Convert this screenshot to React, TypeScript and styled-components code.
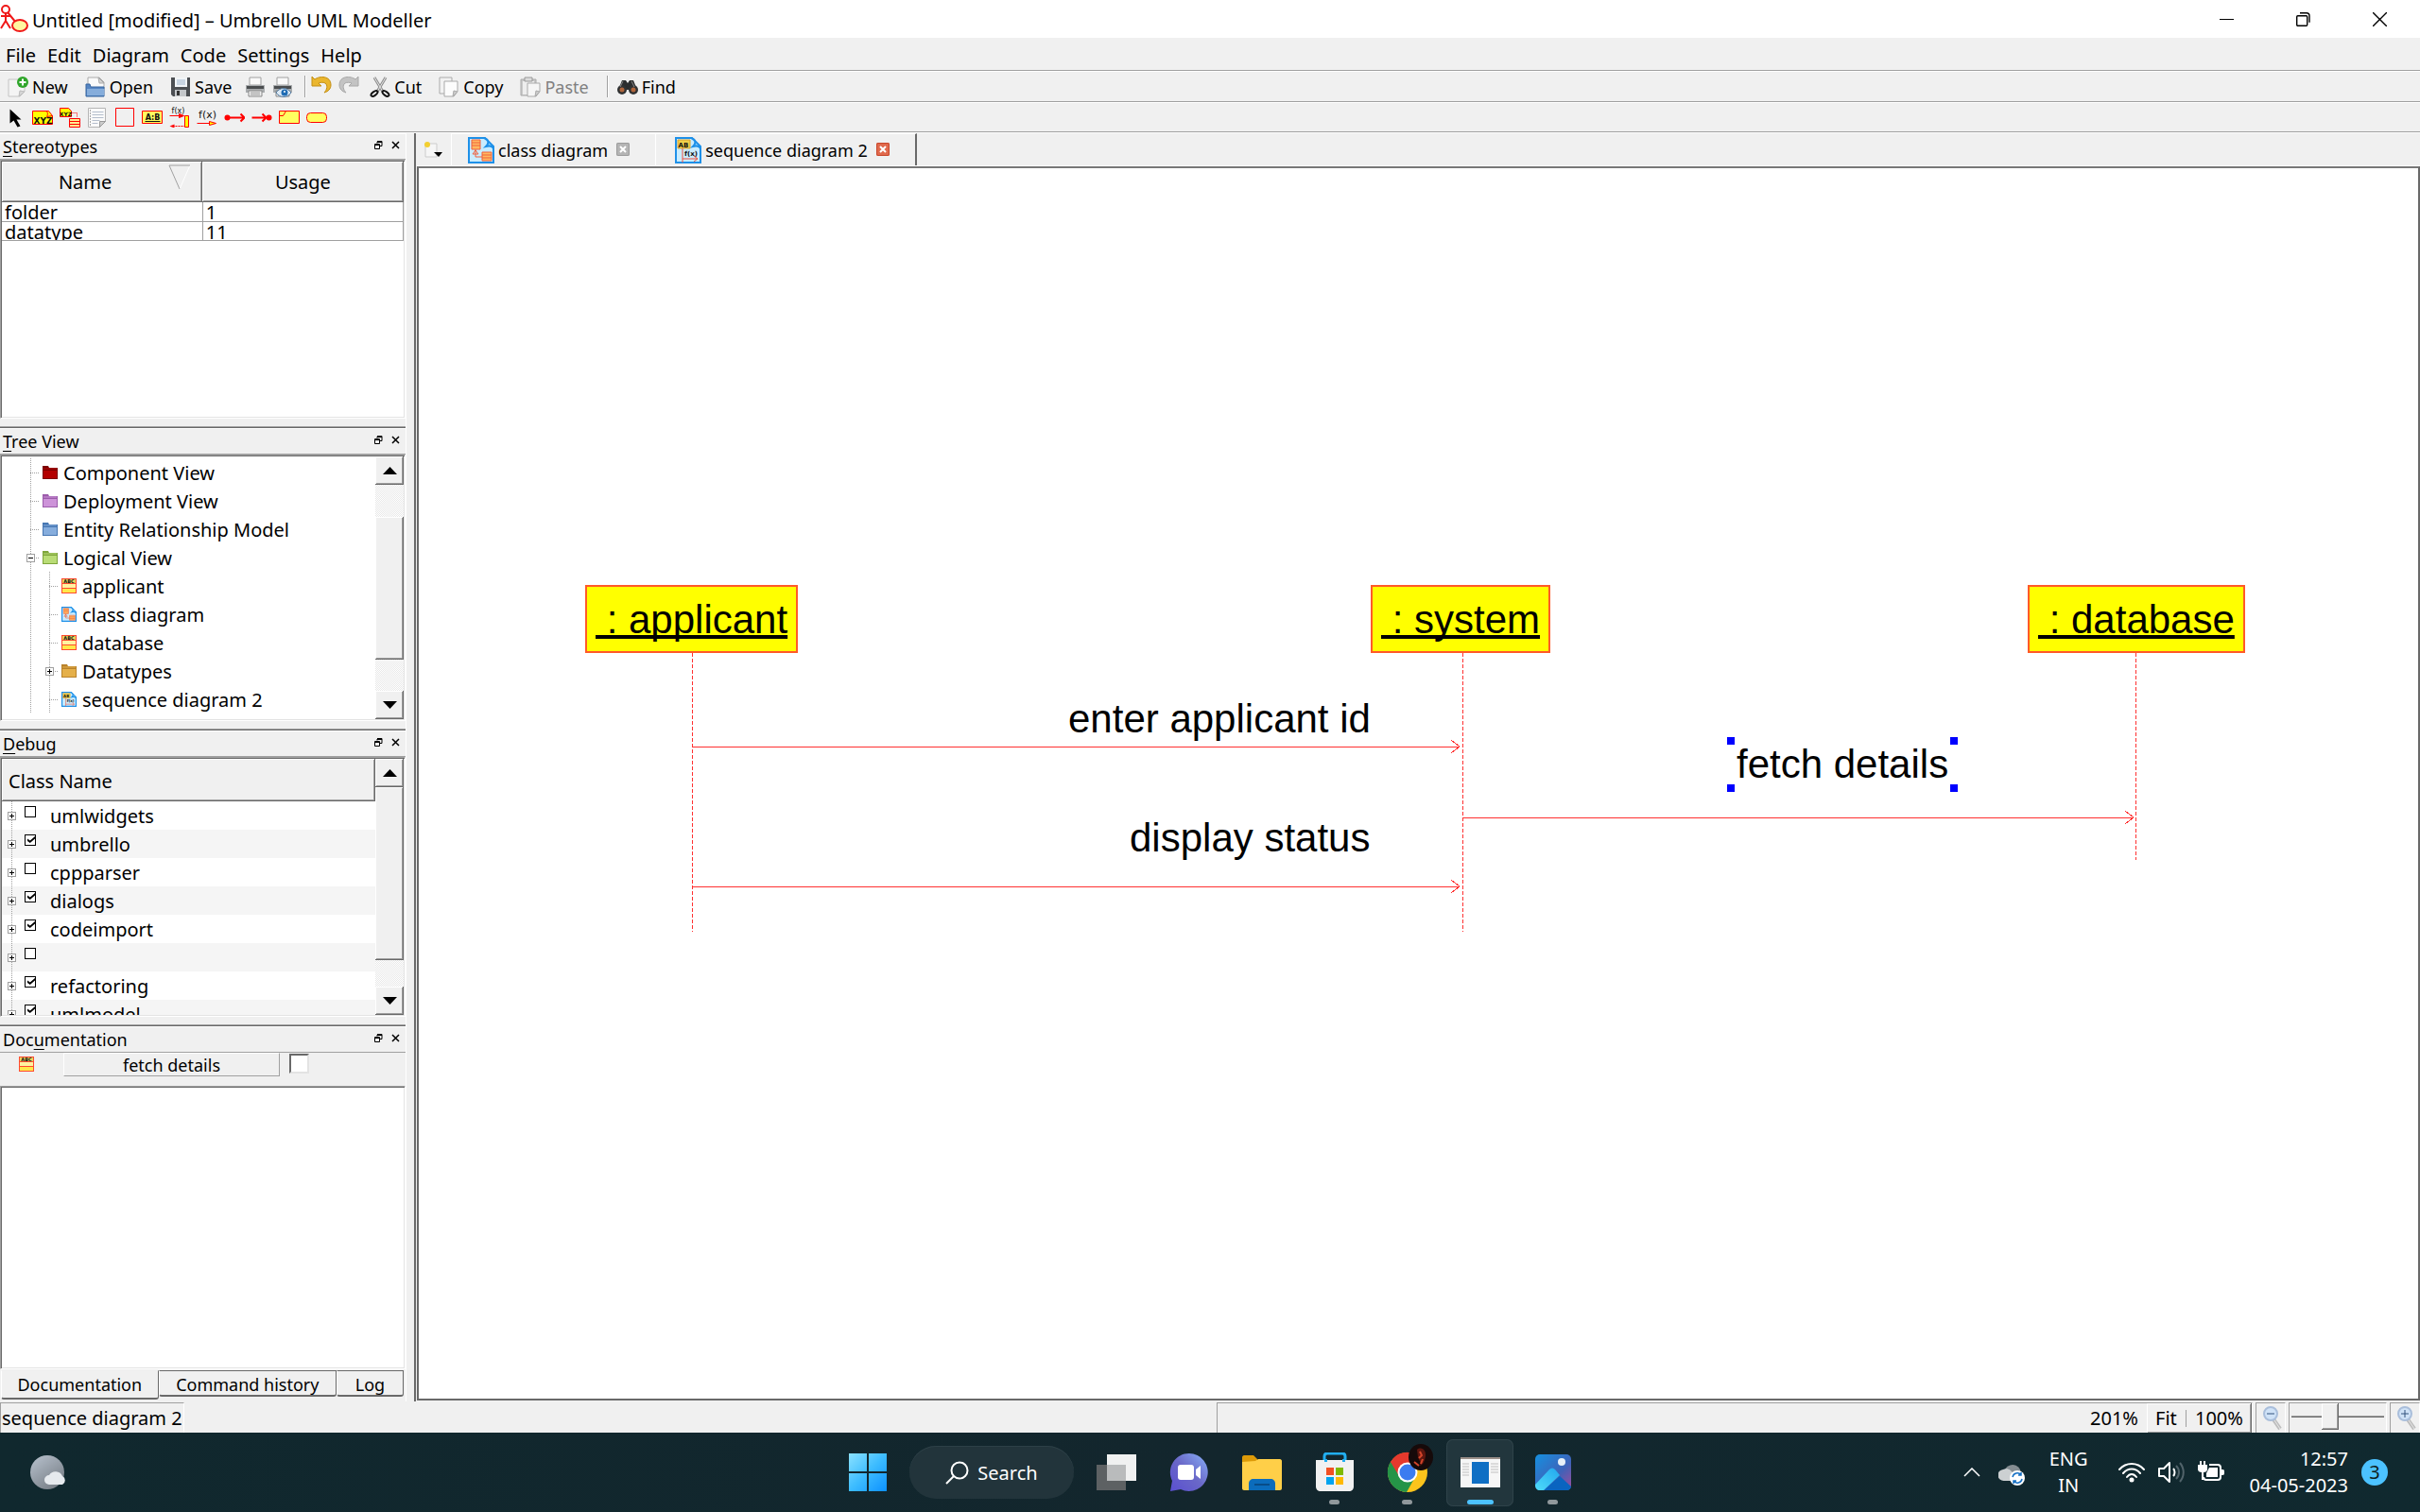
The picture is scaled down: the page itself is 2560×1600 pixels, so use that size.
import React, { ReactNode } from "react";
import styled, { createGlobalStyle, css } from "styled-components";

const face = "#f0f0f0";
const shade = "#a0a0a0";
const dark = "#696969";
const ui = `"Noto Sans", "Open Sans", sans-serif`;

const raised = css`
  background: ${face};
  box-shadow: inset -1px -1px 0 ${dark}, inset 1px 1px 0 #fff, inset -2px -2px 0 ${shade};
`;

const Global = createGlobalStyle`
  * { box-sizing: border-box; }
  body { margin: 0; font-family: ${ui}; font-size: 20px; color: #000; background: ${face}; }
  button { font: inherit; color: inherit; background: none; border: 0; padding: 0; margin: 0; }
  ul { list-style: none; margin: 0; padding: 0; }
  svg { display: block; flex: none; }
`;

const Window = styled.div`
  display: flex;
  flex-direction: column;
  height: 100vh;
  overflow: hidden;
  background: ${face};
  white-space: nowrap;
`;

/* ---------- window chrome ---------- */

const TitleBar = styled.header`
  display: flex;
  align-items: center;
  flex: none;
  height: 40px;
  padding-right: 2px;
  background: #fff;
`;
const WindowTitle = styled.h1`
  flex: 1;
  margin: 0;
  padding: 2px 0 0 4px;
  font-size: 20px;
  font-weight: 400;
`;
const WindowButton = styled.button`
  display: grid;
  place-items: center;
  width: 81px;
  height: 40px;
`;
const MenuBar = styled.nav`
  display: flex;
  align-items: center;
  flex: none;
  height: 35px;
  padding-top: 2px;
  border-bottom: 1px solid ${shade};
`;
const MenuItem = styled.button`
  padding: 0 6px;
`;
const Toolbar = styled.div<{ $h: number; $pad?: number }>`
  display: flex;
  align-items: stretch;
  flex: none;
  height: ${(p) => p.$h}px;
  padding-left: ${(p) => p.$pad ?? 0}px;
  border-top: 1px solid #fff;
  border-bottom: 1px solid ${shade};
`;
const TextTool = styled.button`
  display: flex;
  align-items: center;
  gap: 4px;
  padding: 0 10px 0 8px;
  font-size: 18px;
  &:disabled { color: #808080; }
`;
const IconTool = styled.button`
  display: flex;
  align-items: center;
  padding: 0 3px 0 4px;
`;
const ToolSeparator = styled.span`
  width: 2px;
  margin: 4px 1px 4px 9px;
  border-left: 1px solid ${shade};
  border-right: 1px solid #fff;
`;

/* ---------- layout ---------- */

const Workspace = styled.div`
  display: grid;
  grid-template-columns: 438px minmax(0, 1fr);
  flex: 1;
  min-height: 0;
  border-top: 1px solid #fff;
`;
const DockColumn = styled.div`
  display: grid;
  grid-template-rows: minmax(0, 312fr) minmax(0, 320fr) minmax(0, 313fr) minmax(0, 397fr);
  min-height: 0;
  margin-right: 8px;
  border-right: 1px solid #fff;
`;
const Dock = styled.section`
  display: flex;
  flex-direction: column;
  min-height: 0;
  padding-bottom: 9px;
  border-bottom: 1px solid ${dark};
  box-shadow: inset 0 -1px 0 ${shade};
  &:last-child { padding-bottom: 2px; border: 0; box-shadow: none; }
`;
const DockHeader = styled.header`
  display: flex;
  align-items: center;
  flex: none;
  height: 28px;
  padding-right: 2px;
  border-top: 1px solid #fff;
  border-bottom: 1px solid ${shade};
`;
const DockTitle = styled.h2`
  flex: 1;
  margin: 0;
  padding-left: 3px;
  font-size: 18px;
  font-weight: 400;
  text-underline-offset: 3px;
`;
const DockButton = styled.button`
  display: grid;
  place-items: center;
  width: 18px;
  height: 22px;
  padding-bottom: 3px;
`;
const Sunken = styled.div`
  display: flex;
  flex: 1;
  min-height: 0;
  overflow: hidden;
  background: #fff;
  border: 1px solid ${shade};
  border-right-color: #fff;
  border-bottom-color: #fff;
  box-shadow: inset 1px 1px 0 ${dark}, inset -1px -1px 0 #e3e3e3;
  padding: 1px 0 1px 1px;
`;

/* ---------- stereotypes ---------- */

const StereoTable = styled.table`
  width: 100%;
  height: max-content;
  border-collapse: collapse;
  table-layout: fixed;
  margin-right: 1px;
`;
const HeadCell = styled.th`
  height: 43px;
  padding: 0;
  font-weight: 400;
  ${raised}
`;
const HeadInner = styled.div<{ $sorted?: boolean }>`
  display: flex;
  justify-content: center;
  align-items: center;
  padding-right: ${(p) => (p.$sorted ? 12 : 0)}px;
  span { flex: 1; text-align: center; }
`;
const SortMark = styled.svg`
  margin-bottom: 10px;
`;
const StereoCell = styled.td`
  height: 20px;
  padding: 0 3px;
  border-bottom: 1px solid ${shade};
  border-right: 1px solid ${shade};
`;
const Clip = styled.div`
  height: 19px;
  line-height: 22px;
  overflow: hidden;
`;

/* ---------- scroll bar ---------- */

const ScrollTrack = styled.div`
  display: flex;
  flex-direction: column;
  flex: none;
  width: 30px;
  margin-right: 1px;
  background: repeating-conic-gradient(#fff 0 25%, #e8e8e8 0 50%) 0 0 / 2px 2px;
`;
const ScrollButton = styled.button`
  display: grid;
  place-items: center;
  flex: none;
  height: 30px;
  ${raised}
`;
const ScrollSpace = styled.div<{ $grow: number }>`
  flex: ${(p) => p.$grow} 1 0;
`;
const ScrollThumb = styled.div<{ $grow: number }>`
  flex: ${(p) => p.$grow} 1 0;
  ${raised}
`;

/* ---------- trees ---------- */

const Tree = styled.ul<{ $top?: number }>`
  flex: 1;
  min-width: 0;
  padding-top: ${(p) => p.$top ?? 0}px;
  overflow: hidden;
`;
const TreeRow = styled.li<{ $striped?: boolean }>`
  display: flex;
  align-items: stretch;
  height: 30px;
  line-height: 32px;
  background: ${(p) => (p.$striped ? "#f5f5f5" : "#fff")};
  > svg { align-self: center; }
`;
const Guide = styled.span<{ $w?: number; $left: number; $stub?: boolean }>`
  flex: none;
  position: relative;
  width: ${(p) => p.$w ?? 20}px;
  background-repeat: repeat-y, repeat-x;
  background-image: linear-gradient(${shade} 50%, transparent 50%)
    ${(p) => (p.$stub ? `, linear-gradient(90deg, ${shade} 50%, #fff 50%)` : "")};
  background-size: 1px 2px, 2px 1px;
  background-position: ${(p) => p.$left}px 0, ${(p) => p.$left}px 15px;
  background-clip: border-box, content-box;
  padding: 0 4px 0 ${(p) => p.$left}px;
`;
const Expander = styled.button<{ $left: number }>`
  position: absolute;
  left: ${(p) => p.$left - 4}px;
  top: 11px;
  width: 9px;
  height: 9px;
  background: #fff;
  border: 1px solid ${shade};
  svg { margin: 1px; }
`;
const TreeLabel = styled.span`
  padding-left: 6px;
`;
const ClassHeader = styled.div`
  flex: none;
  height: 45px;
  line-height: 48px;
  padding-left: 7px;
  ${raised}
`;
const DebugList = styled.div`
  display: flex;
  flex-direction: column;
  flex: 1;
  min-width: 0;
`;
const CheckLabel = styled.label`
  display: flex;
  gap: 15px;
  padding-left: 4px;
`;
const TickBox = styled.input`
  appearance: none;
  position: relative;
  width: 12px;
  height: 12px;
  margin: 5px 0 0;
  background: #fff;
  border: 1px solid #000;
  &:checked::after {
    content: "";
    position: absolute;
    left: 2px;
    top: 1px;
    width: 8px;
    height: 7px;
    background: #000;
    clip-path: polygon(0 35%, 35% 65%, 100% 0, 100% 35%, 35% 100%, 0 70%);
  }
`;

/* ---------- documentation ---------- */

const DocBar = styled.div`
  display: flex;
  flex: none;
  height: 35px;
  padding-left: 20px;
  > svg { margin-top: 4px; }
`;
const DocName = styled.button`
  width: 229px;
  height: 25px;
  margin: 0 10px 0 31px;
  font-size: 18px;
  line-height: 24px;
  border: 1px solid;
  border-color: #fff ${shade} ${shade} #fff;
`;
const DocCheck = styled.input`
  appearance: none;
  width: 21px;
  height: 21px;
  margin: 1px 0;
  background: #fff;
  border: 2px solid;
  border-color: ${dark} #e3e3e3 #e3e3e3 ${dark};
`;
const DocText = styled.textarea`
  flex: 1;
  border: 0;
  margin: 1px;
  padding: 4px;
  resize: none;
  outline: 0;
  font: inherit;
`;
const BottomTabs = styled.div`
  display: flex;
  align-items: flex-start;
  flex: none;
  height: 32px;
  padding: 1px 2px 0 1px;
`;
const BottomTab = styled.button<{ $active?: boolean; $grow: number }>`
  flex: ${(p) => p.$grow} 1 0;
  height: ${(p) => (p.$active ? 31 : 28)}px;
  font-size: 18px;
  line-height: 28px;
  background: ${face};
  border: 1px solid;
  border-color: ${(p) => (p.$active ? face : dark)} ${dark} ${dark} #fff;
  border-bottom-width: 2px;
  border-radius: 0 0 3px 3px;
`;

/* ---------- document area ---------- */

const Editor = styled.main`
  display: flex;
  flex-direction: column;
  min-width: 0;
  min-height: 0;
  padding: 0 0 1px 1px;
  border-left: 2px solid ${dark};
`;
const TabStrip = styled.div`
  display: flex;
  flex: none;
  height: 35px;
  border-bottom: 1px solid #fff;
`;
const NewTab = styled.button`
  display: flex;
  align-items: center;
  width: 36px;
  padding-left: 7px;
`;
const Tab = styled.div<{ $active?: boolean }>`
  display: flex;
  align-items: center;
  padding: 0 27px 0 ${(p) => (p.$active ? 20 : 17)}px;
  border-left: 1px solid #fff;
  border-top: 1px solid #fff;
  border-right: ${(p) => (p.$active ? `2px solid ${dark}` : "0")};
  font-size: 18px;
`;
const TabName = styled.button`
  display: flex;
  align-items: center;
  gap: 4px;
`;
const TabClose = styled.button<{ $active?: boolean }>`
  width: 14px;
  height: 14px;
  margin: 0 0 2px 9px;
  border-radius: 2px;
  background: ${(p) => (p.$active ? "#e0694c" : "#b4b4b4")};
  box-shadow: inset 0 0 0 1px ${(p) => (p.$active ? "#c8472c" : "#9c9c9c")};
`;
const Canvas = styled.div`
  position: relative;
  flex: 1;
  min-height: 0;
  overflow: hidden;
  background: #fff;
  border: 2px solid ${dark};
  border-top-color: #777;
  font-family: "Liberation Sans", Arial, sans-serif;
  font-size: 42px;
  line-height: 48px;
`;
const Wires = styled.svg`
  position: absolute;
  inset: 0;
  width: 100%;
  height: 100%;
`;
const Lifeline = styled.div<{ $x: number; $y: number }>`
  position: absolute;
  left: ${(p) => p.$x}px;
  top: ${(p) => p.$y}px;
  padding: 11px 9px 9px;
  white-space: pre;
  background: #ff0;
  border: 2px solid #ff5a28;
  text-decoration: underline;
  text-decoration-thickness: 4px;
  text-underline-offset: 2px;
  text-decoration-skip-ink: none;
`;
const Message = styled.div<{ $x: number; $y: number }>`
  position: absolute;
  left: ${(p) => p.$x}px;
  top: ${(p) => p.$y}px;
  padding: 5px 10px;
`;
const Handle = styled.i<{ $right?: boolean; $bottom?: boolean }>`
  position: absolute;
  width: 8px;
  height: 8px;
  background: #00f;
  ${(p) => (p.$right ? "right: 0;" : "left: 0;")}
  ${(p) => (p.$bottom ? "bottom: 0;" : "top: 0;")}
`;

/* ---------- status bar ---------- */

const StatusBar = styled.footer`
  display: grid;
  grid-template-columns: 1287fr 1273fr;
  flex: none;
  height: 33px;
  padding: 1px 0 2px;
`;
const StatusName = styled.span`
  justify-self: start;
  padding: 0 1px;
  line-height: 32px;
  border: 1px solid;
  border-color: ${shade} #fff #fff ${shade};
`;
const StatusRight = styled.div`
  display: flex;
  gap: 3px;
`;
const ZoomInfo = styled.div`
  display: flex;
  flex: 1;
  justify-content: flex-end;
  align-items: stretch;
  border: 1px solid;
  border-color: ${shade} #fff #fff ${shade};
  line-height: 32px;
`;
const ZoomButtons = styled.div`
  display: flex;
  align-items: center;
  margin-left: 9px;
  width: 111px;
  justify-content: space-evenly;
  ${raised}
`;
const ZoomRule = styled.i`
  width: 1px;
  height: 18px;
  background: ${shade};
`;
const ZoomCell = styled.button`
  display: grid;
  place-items: center;
  width: 32px;
  padding-left: 4px;
  border: 1px solid;
  border-color: ${shade} #fff #fff ${shade};
`;
const SliderCell = styled.div`
  display: flex;
  width: 104px;
  border: 1px solid;
  border-color: ${shade} #fff #fff ${shade};
`;
const Slider = styled.input`
  appearance: none;
  width: 100%;
  height: 28px;
  margin: 0 2px;
  background: linear-gradient(${dark}, ${dark}) 0 14px / 100% 1px no-repeat,
    linear-gradient(${shade}, ${shade}) 0 13px / 100% 1px no-repeat;
  &::-webkit-slider-thumb {
    appearance: none;
    width: 18px;
    height: 28px;
    ${raised}
  }
`;

/* ---------- taskbar ---------- */

const Taskbar = styled.footer`
  display: grid;
  grid-template-columns: 1fr auto 1fr;
  align-items: center;
  flex: none;
  height: 84px;
  color: #fff;
  background: linear-gradient(90deg, #10282e, #13262d 50%, #10292f);
`;
const Weather = styled.button`
  justify-self: start;
  margin-left: 31px;
`;
const Apps = styled.div`
  display: flex;
  align-items: center;
`;
const AppButton = styled.button<{ $active?: boolean; $running?: boolean }>`
  position: relative;
  display: grid;
  place-items: center;
  width: 71px;
  height: 71px;
  margin: 0 3px;
  border-radius: 7px;
  ${(p) => p.$active && "background: #22363d; box-shadow: inset 0 0 0 1px #2f434a;"}
  &::after {
    content: "";
    position: absolute;
    bottom: 2px;
    width: ${(p) => (p.$active ? 28 : 11)}px;
    height: 5px;
    border-radius: 3px;
    background: ${(p) => (p.$active ? "#4cc2ff" : p.$running ? "#90989c" : "transparent")};
  }
`;
const SearchPill = styled.button`
  display: flex;
  align-items: center;
  justify-content: center;
  gap: 9px;
  width: 174px;
  height: 56px;
  margin: 0 6px;
  border-radius: 28px;
  background: #22343b;
  box-shadow: inset 0 1px 0 #2d4047;
`;
const Tray = styled.div`
  display: flex;
  align-items: center;
  justify-self: end;
  padding-right: 34px;
  line-height: 28px;
`;
const TrayButton = styled.button<{ $before?: number }>`
  margin-left: ${(p) => p.$before ?? 0}px;
`;
const Clock = styled.button`
  margin-left: 27px;
  text-align: right;
`;
const Badge = styled.button`
  width: 28px;
  height: 28px;
  margin-left: 14px;
  border-radius: 50%;
  background: #4cc2ff;
  color: #102020;
`;

/* ---------- icons ---------- */

const Ico = ({ s = 22, w, h, vb, children }: { s?: number; w?: number; h?: number; vb?: string; children: ReactNode }) => (
  <svg width={w ?? s} height={h ?? s} viewBox={vb ?? `0 0 ${w ?? s} ${h ?? s}`} fill="none" aria-hidden="true">
    {children}
  </svg>
);

const AppLogo = () => (
  <Ico w={30} h={30}>
    <g stroke="#f01818" strokeWidth="2" fill="#fff">
      <circle cx="6" cy="5" r="4" />
      <path d="M6 9v9M1 12h11M6 17l-5 8M6 17l5 8M8 8l9 11" fill="none" />
      <ellipse cx="21" cy="22" rx="8" ry="6" fill="#fff6a0" />
    </g>
  </Ico>
);

const NewIcon = () => (
  <Ico>
    <path d="M1 3h17v13l-5 5H1z" fill="#f4f4f4" stroke="#c4c4c4" />
    <path d="M12 21l1-6 5 1z" fill="#d8d8d8" stroke="#bbb" />
    <circle cx="16" cy="6" r="6" fill="#2fa52a" />
    <path d="M16 2.500v7M12.500 6h7" stroke="#fff" strokeWidth="2" />
  </Ico>
);
const OpenIcon = () => (
  <Ico>
    <path d="M3 12V1h12l5 5v7z" fill="#fafafa" stroke="#aaa" />
    <path d="M14 1l1 6 5 0z" fill="#d5d5d5" stroke="#aaa" />
    <path d="M1 8h4l1 3h14v10H1z" fill="#5585c2" stroke="#36649f" />
    <path d="M2 13h18v7H2z" fill="#86addb" />
  </Ico>
);
const SaveIcon = () => (
  <Ico>
    <path d="M1 1h20v20H3l-2-2z" fill="#4c4f53" />
    <path d="M5 1h13v10H5z" fill="#f2f5f8" />
    <path d="M7 4h9M7 6h9M7 8h9" stroke="#9fb4cc" />
    <path d="M5 14h12v7H5z" fill="#c4c7ca" />
    <path d="M7 15h3v5H7z" fill="#333" />
  </Ico>
);
const PrintIcon = ({ preview }: { preview?: boolean }) => (
  <Ico>
    <path d="M5 1h12v8H5z" fill="#fafafa" stroke="#a0a0a0" />
    <path d="M1 9h20v8H1z" fill="#a9acae" />
    <path d="M2 10h18v3H2z" fill="#4a4d4f" />
    <path d="M4 15h14v6H4z" fill="#eee" stroke="#888" />
    <path d="M6 17h10M6 19h10" stroke="#999" />
    {preview && (
      <>
        <path d="M4 17c4-6 12-6 16 0-4 6-12 6-16 0z" fill="#dbe9f5" stroke="#54799d" />
        <circle cx="13" cy="17" r="3.500" fill="#1f6cb4" />
        <circle cx="13" cy="16" r="1" fill="#fff" />
      </>
    )}
  </Ico>
);
const UndoIcon = ({ redo }: { redo?: boolean }) => (
  <Ico>
    <g transform={redo ? "translate(22 -1) scale(-1 1)" : "translate(0 -1)"}>
      <path
        d="M1 1l3 3c5-4 17-4 17 6 0 4-3 7-7 8 3-3 4-8 1-10-2-1-5-1-7 0l3 3H1z"
        fill={redo ? "#c3c3c3" : "#eab62e"}
        stroke={redo ? "#a8a8a8" : "#c38e12"}
        strokeWidth="1"
      />
    </g>
  </Ico>
);
const CutIcon = () => (
  <Ico>
    <path d="M5 1l9 15M17 1L8 16" stroke="#8e8e8e" strokeWidth="3" />
    <path d="M5 1l9 15M17 1L8 16" stroke="#e4e4e4" strokeWidth="1" />
    <g stroke="#111" strokeWidth="2">
      <ellipse cx="5" cy="18" rx="4" ry="2" transform="rotate(-35 5 18)" />
      <ellipse cx="17" cy="18" rx="4" ry="2" transform="rotate(35 17 18)" />
    </g>
  </Ico>
);
const CopyIcon = () => (
  <Ico>
    <path d="M1 1h13v17H1z" fill="#f2f2f2" stroke="#aaa" />
    <path d="M6 5h14v11l-4 5H6z" fill="#fcfcfc" stroke="#aaa" />
    <path d="M15 21l1-6 4 1z" fill="#ccc" stroke="#aaa" />
  </Ico>
);
const PasteIcon = () => (
  <Ico>
    <path d="M1 3h16v17H1z" fill="#c9c9c9" stroke="#aaa" />
    <path d="M3 5h12v14H3z" fill="#eee" />
    <path d="M5 1h8v4H5z" fill="#ddd" stroke="#999" />
    <path d="M8 7h13v9l-4 5H8z" fill="#f6f6f6" stroke="#aaa" />
    <path d="M16 21l1-6 4 1z" fill="#ccc" stroke="#aaa" />
  </Ico>
);
const FindIcon = () => (
  <Ico>
    <path d="M5 4h4l2 3 2-3h4l4 10H1z" fill="#2b2d2e" />
    <circle cx="5" cy="14" r="5" fill="#303233" />
    <circle cx="17" cy="14" r="5" fill="#303233" />
    <circle cx="5" cy="14" r="2.500" fill="#b0663c" />
    <circle cx="17" cy="14" r="2.500" fill="#b0663c" />
    <path d="M6 5l-3 6M15 5l3 6" stroke="#888" />
  </Ico>
);

const red = "#f00";
const IconText = ({ x, y, size, thin, children }: { x: number; y: number; size: number; thin?: boolean; children: string }) => (
  <text
    x={x}
    y={y}
    fontSize={size}
    fontWeight={thin ? 400 : 700}
    fontFamily="DejaVu Sans, sans-serif"
    fill="#111"
    textAnchor="middle"
  >
    {children}
  </text>
);

const drawTools: { name: string; icon: ReactNode }[] = [
  { name: "Select", icon: <path d="M5 2v15l4-3 4 7 3-1-4-7h5z" fill="#000" /> },
  {
    name: "Object",
    icon: (
      <>
        <path d="M0 4h17l4 5v9H0z" fill="#ff0" stroke={red} />
        <path d="M13 4c4 0 3 4 2 6l6-1" stroke={red} />
        <IconText x={11} y={17} size={9}>XYZ</IconText>
      </>
    ),
  },
  {
    name: "Create object",
    icon: (
      <>
        <path d="M0 1h9l3 3v6H0z" fill="#ff0" stroke={red} />
        <IconText x={6} y={9} size={6}>XYZ</IconText>
        <path d="M13 6h5v5" stroke={red} strokeDasharray="1 1" />
        <path d="M10 12h11v9H10zM10 15h11M10 18h11" fill="#ffef90" stroke={red} />
      </>
    ),
  },
  {
    name: "Note",
    icon: (
      <>
        <path d="M1 1h18v14l-6 6H1z" fill="#fafafa" stroke="#b5b5b5" />
        <path d="M5 5h12M5 8h12M5 11h12M5 14h8M5 17h6" stroke="#b4becc" />
        <path d="M3 3v17" stroke="#555" strokeDasharray="1 2" />
        <path d="M13 21v-6h6z" fill="#ccc" stroke="#999" />
      </>
    ),
  },
  { name: "Box", icon: <path d="M1 1h19v19H1z" stroke={red} /> },
  {
    name: "Text label",
    icon: (
      <>
        <path d="M0 4h21v13H0z" fill="#ffff60" stroke={red} />
        <IconText x={11} y={13} size={8}>A:B</IconText>
        <path d="M3 15h16" stroke="#111" />
      </>
    ),
  },
  {
    name: "Synchronous message",
    icon: (
      <>
        <IconText x={9} y={6} size={8} thin>f(x)</IconText>
        <path d="M0 9h13M10 7l5 2-5 2z" stroke={red} fill={red} />
        <path d="M16 9h4v12h-4z" fill="#ff0" stroke={red} />
        <path d="M3 20h13" stroke={red} strokeDasharray="2 1" />
        <path d="M5 18l-5 2 5 2z" fill={red} />
      </>
    ),
  },
  {
    name: "Asynchronous message",
    icon: (
      <>
        <IconText x={11} y={11} size={11} thin>f(x)</IconText>
        <path d="M0 17h13" stroke={red} strokeWidth="1" />
        <path d="M13 15l7 2-7 2z" fill="#ff0" stroke={red} />
      </>
    ),
  },
  {
    name: "Found message",
    icon: (
      <>
        <circle cx="3" cy="11" r="3" fill={red} />
        <path d="M3 11h18M17 7l4 4-4 4" stroke={red} strokeWidth="2" />
      </>
    ),
  },
  {
    name: "Lost message",
    icon: (
      <>
        <circle cx="18" cy="11" r="3" fill={red} />
        <path d="M0 11h16M11 7l4 4-4 4" stroke={red} strokeWidth="2" />
      </>
    ),
  },
  {
    name: "Combined fragment",
    icon: (
      <>
        <path d="M0 4h21v13H0z" fill="#ffff60" stroke={red} />
        <path d="M0 9h4l3-5" stroke={red} />
      </>
    ),
  },
  { name: "Precondition", icon: <rect x="0" y="6" width="21" height="10" rx="4" fill="#ffff60" stroke={red} /> },
];

const Folder = ({ c, d }: { c: string; d: string }) => (
  <Ico s={16}>
    <path d="M0 15V1h6l1 2h9v12z" fill={d} />
    <path d="M1 6h14v8H1z" fill={c} />
    <path d="M1 4h14" stroke={c} />
  </Ico>
);
const ClassIcon = () => (
  <Ico s={16}>
    <path d="M0 0h16v16H0z" fill="#ff4a30" />
    <path d="M1 1h14v4H1z" fill="#e8d860" />
    <path d="M1 6h14v4H1z" fill="#fff3a0" />
    <path d="M1 11h14v4H1z" fill="#ffe84a" />
    <IconText x={8} y={5} size={5}>ABC</IconText>
  </Ico>
);
const DiagramIcon = ({ s = 16, seq }: { s?: number; seq?: boolean }) => (
  <Ico s={s} vb="0 0 28 28">
    <path d="M1 1h17l9 9v17H1z" fill="#c9ecff" stroke="#1e90e8" strokeWidth="2" />
    <path d="M17 1c6 2 5 6 2 9 4-1 7 0 8 2" fill="#7cc8f8" stroke="#1e90e8" strokeWidth="2" />
    {seq ? (
      <>
        <path d="M3 3h13v9H3z" fill="#f1d14a" stroke="#d8a030" />
        <IconText x={9} y={11} size={7}>AB</IconText>
        <path d="M8 12v15M8 23h15M20 20l4 3-4 3" stroke="#f0503c" strokeWidth="1" />
        <IconText x={17} y={20} size={7}>f(x)</IconText>
      </>
    ) : (
      <g fill="#ffb860" stroke="#f0603c" strokeWidth="1">
        <path d="M4 3h9v10H4zM4 6h9M4 9h9M15 16h10v9H15zM15 19h10M15 22h10" />
        <path d="M8 13v8h7M5 18l3-4 3 4z" fill="none" />
      </g>
    )}
  </Ico>
);

const FloatIcon = () => (
  <Ico s={9}>
    <path d="M3 0.500h5v5H6M3 1.500h5M3 2.500V1M0.500 3.500h5v5h-5zM0.500 4.500h5" stroke="#000" />
  </Ico>
);
const CloseIcon = () => (
  <Ico s={9}>
    <path d="M1 1l7 7M8 1L1 8" stroke="#000" strokeWidth="1.500" />
  </Ico>
);
const ArrowIcon = ({ down }: { down?: boolean }) => (
  <Ico w={15} h={8}>
    <path d={down ? "M0 0h15L7.500 8z" : "M0 8h15L7.500 0z"} fill="#000" />
  </Ico>
);
const PlusMinus = ({ open }: { open?: boolean }) => (
  <Ico s={5}>
    <path d={open ? "M0 2.500h5" : "M0 2.500h5M2.500 0v5"} stroke="#000" />
  </Ico>
);
const Magnifier = ({ plus }: { plus?: boolean }) => (
  <Ico w={22} h={26}>
    <path d="M12 14l7 10" stroke="#bdbdbd" strokeWidth="4" />
    <path d="M13 15l6 9" stroke="#e8e8e8" strokeWidth="1" />
    <circle cx="9" cy="8" r="7" fill="#cfe2f7" stroke="#a9bedb" strokeWidth="2" />
    <path d={plus ? "M5 8h8M9 4v8" : "M5 8h8"} stroke="#33527c" strokeWidth="1" />
  </Ico>
);

/* ---------- pieces ---------- */

const DockPanel = ({ title, children }: { title: ReactNode; children: ReactNode }) => (
  <Dock>
    <DockHeader>
      <DockTitle>{title}</DockTitle>
      <DockButton aria-label="Float"><FloatIcon /></DockButton>
      <DockButton aria-label="Close"><CloseIcon /></DockButton>
    </DockHeader>
    {children}
  </Dock>
);

const ScrollBar = ({ before, thumb, after }: { before: number; thumb: number; after: number }) => (
  <ScrollTrack>
    <ScrollButton aria-label="Scroll up"><ArrowIcon /></ScrollButton>
    <ScrollSpace $grow={before} />
    <ScrollThumb $grow={thumb} />
    <ScrollSpace $grow={after} />
    <ScrollButton aria-label="Scroll down"><ArrowIcon down /></ScrollButton>
  </ScrollTrack>
);

type Node = { label: string; icon: ReactNode; level: 1 | 2; state?: "open" | "closed" };
const nodes: Node[] = [
  { label: "Component View", icon: <Folder c="#b40000" d="#7c0000" />, level: 1 },
  { label: "Deployment View", icon: <Folder c="#cd93d9" d="#9c5cab" />, level: 1 },
  { label: "Entity Relationship Model", icon: <Folder c="#86addd" d="#4676b2" />, level: 1 },
  { label: "Logical View", icon: <Folder c="#b9dc76" d="#7fa63c" />, level: 1, state: "open" },
  { label: "applicant", icon: <ClassIcon />, level: 2 },
  { label: "class diagram", icon: <DiagramIcon />, level: 2 },
  { label: "database", icon: <ClassIcon />, level: 2 },
  { label: "Datatypes", icon: <Folder c="#e5b04a" d="#b9822a" />, level: 2, state: "closed" },
  { label: "sequence diagram 2", icon: <DiagramIcon seq />, level: 2 },
];

const debugClasses: [string, boolean][] = [
  ["umlwidgets", false],
  ["umbrello", true],
  ["cppparser", false],
  ["dialogs", true],
  ["codeimport", true],
  ["", false],
  ["refactoring", true],
  ["umlmodel", true],
];

const Arrow = ({ x1, x2, y }: { x1: number; x2: number; y: number }) => (
  <path d={`M${x1} ${y}H${x2}M${x2 - 9} ${y - 7}L${x2} ${y}L${x2 - 9} ${y + 7}`} />
);

const WifiIcon = () => (
  <Ico w={28} h={22}>
    <g stroke="#fff" strokeWidth="2" strokeLinecap="round">
      <path d="M1 8c7-8 19-8 26 0M5 12c5-6 13-6 18 0M9 16c3-4 7-4 10 0" />
    </g>
    <circle cx="14" cy="19" r="2.500" fill="#fff" />
  </Ico>
);

export default function App() {
  return (
    <Window>
      <Global />
      <TitleBar>
        <AppLogo />
        <WindowTitle>Untitled [modified] – Umbrello UML Modeller</WindowTitle>
        <WindowButton aria-label="Minimize"><Ico s={15}><path d="M0 7.500h15" stroke="#000" /></Ico></WindowButton>
        <WindowButton aria-label="Restore">
          <Ico s={15}>
            <rect x="0.700" y="3.700" width="11" height="10.500" rx="1" stroke="#000" strokeWidth="1.400" />
            <path d="M4 0.700h7c2 0 3 1 3 3v7" stroke="#000" strokeWidth="1.400" />
          </Ico>
        </WindowButton>
        <WindowButton aria-label="Close">
          <Ico s={15}><path d="M0 0l15 15M15 0L0 15" stroke="#000" strokeWidth="1.400" /></Ico>
        </WindowButton>
      </TitleBar>

      <MenuBar>
        {["File", "Edit", "Diagram", "Code", "Settings", "Help"].map((m) => (
          <MenuItem key={m}>{m}</MenuItem>
        ))}
      </MenuBar>

      <Toolbar $h={33}>
        <TextTool><NewIcon />New</TextTool>
        <TextTool><OpenIcon />Open</TextTool>
        <TextTool><SaveIcon />Save</TextTool>
        <IconTool aria-label="Print"><PrintIcon /></IconTool>
        <IconTool aria-label="Print preview"><PrintIcon preview /></IconTool>
        <ToolSeparator />
        <IconTool aria-label="Undo"><UndoIcon /></IconTool>
        <IconTool aria-label="Redo"><UndoIcon redo /></IconTool>
        <TextTool><CutIcon />Cut</TextTool>
        <TextTool><CopyIcon />Copy</TextTool>
        <TextTool disabled><PasteIcon />Paste</TextTool>
        <ToolSeparator />
        <TextTool><FindIcon />Find</TextTool>
      </Toolbar>
      <Toolbar $h={32} $pad={1}>
        {drawTools.map((t) => (
          <IconTool key={t.name} aria-label={t.name}>
            <Ico><g transform="translate(0.500 0.500)">{t.icon}</g></Ico>
          </IconTool>
        ))}
      </Toolbar>

      <Workspace>
        <DockColumn>
          <DockPanel title={<><u>S</u>tereotypes</>}>
            <Sunken>
              <StereoTable>
                <thead>
                  <tr>
                    <HeadCell>
                      <HeadInner $sorted>
                        <span>Name</span>
                        <SortMark width="24" height="27" viewBox="0 0 24 27" fill="none">
                          <path d="M23 1L12 26" stroke="#fff" />
                          <path d="M23 1H1l11 25" stroke={shade} />
                        </SortMark>
                      </HeadInner>
                    </HeadCell>
                    <HeadCell>Usage</HeadCell>
                  </tr>
                </thead>
                <tbody>
                  {[["folder", "1"], ["datatype", "11"]].map(([n, u]) => (
                    <tr key={n}>
                      <StereoCell><Clip>{n}</Clip></StereoCell>
                      <StereoCell><Clip>{u}</Clip></StereoCell>
                    </tr>
                  ))}
                </tbody>
              </StereoTable>
            </Sunken>
          </DockPanel>

          <DockPanel title={<><u>T</u>ree View</>}>
            <Sunken>
              <Tree $top={2}>
                {nodes.map((n) => (
                  <TreeRow key={n.label}>
                    <Guide $left={30} $w={n.level === 1 ? 43 : 45} $stub={n.level === 1}>
                      {n.level === 1 && n.state && (
                        <Expander $left={30} aria-label="Collapse"><PlusMinus open /></Expander>
                      )}
                    </Guide>
                    {n.level === 2 && (
                      <Guide $left={5} $w={18} $stub>
                        {n.state && <Expander $left={5} aria-label="Expand"><PlusMinus /></Expander>}
                      </Guide>
                    )}
                    {n.icon}
                    <TreeLabel>{n.label}</TreeLabel>
                  </TreeRow>
                ))}
              </Tree>
              <ScrollBar before={34} thumb={149} after={33} />
            </Sunken>
          </DockPanel>

          <DockPanel title={<><u>D</u>ebug</>}>
            <Sunken>
              <DebugList>
                <ClassHeader>Class Name</ClassHeader>
                <Tree>
                  {debugClasses.map(([name, on], i) => (
                    <TreeRow key={i} $striped={i % 2 === 1}>
                      <Guide $left={10} $stub>
                        <Expander $left={10} aria-label="Expand"><PlusMinus /></Expander>
                      </Guide>
                      <CheckLabel>
                        <TickBox type="checkbox" defaultChecked={on} aria-label={name || "unnamed"} />
                        {name}
                      </CheckLabel>
                    </TreeRow>
                  ))}
                </Tree>
              </DebugList>
              <ScrollBar before={0} thumb={183} after={28} />
            </Sunken>
          </DockPanel>

          <DockPanel title={<>Doc<u>u</u>mentation</>}>
            <DocBar>
              <ClassIcon />
              <DocName>fetch details</DocName>
              <DocCheck type="checkbox" aria-label="Documented" />
            </DocBar>
            <Sunken>
              <DocText aria-label="Documentation" />
            </Sunken>
            <BottomTabs role="tablist">
              <BottomTab role="tab" $active $grow={167}>Documentation</BottomTab>
              <BottomTab role="tab" $grow={189}>Command history</BottomTab>
              <BottomTab role="tab" $grow={70}>Log</BottomTab>
            </BottomTabs>
          </DockPanel>
        </DockColumn>

        <Editor>
          <TabStrip role="tablist">
            <NewTab aria-label="New diagram">
              <Ico w={22} h={18}>
                <path d="M2 3h12v14H2z" fill="#f6f6f6" stroke="#ccc" />
                <circle cx="4" cy="4" r="3" fill="#f3cf30" />
                <path d="M11 12h9l-4 5z" fill="#000" />
              </Ico>
            </NewTab>
            <Tab>
              <TabName role="tab"><DiagramIcon s={28} />class diagram</TabName>
              <TabClose aria-label="Close class diagram">
                <Ico s={14}><path d="M4 4l6 6M10 4l-6 6" stroke="#fff" strokeWidth="2" /></Ico>
              </TabClose>
            </Tab>
            <Tab $active>
              <TabName role="tab"><DiagramIcon s={28} seq />sequence diagram 2</TabName>
              <TabClose $active aria-label="Close sequence diagram 2">
                <Ico s={14}><path d="M4 4l6 6M10 4l-6 6" stroke="#fff" strokeWidth="2" /></Ico>
              </TabClose>
            </Tab>
          </TabStrip>
          <Canvas>
            <Wires fill="none" stroke="#ff3030" strokeWidth="1" shapeRendering="crispEdges">
              <g strokeDasharray="4 2">
                <path d="M289 513V808" />
                <path d="M1104 513V808" />
                <path d="M1816 513V732" />
              </g>
              <Arrow x1={290} x2={1101} y={612} />
              <Arrow x1={1105} x2={1814} y={687} />
              <Arrow x1={290} x2={1101} y={760} />
            </Wires>
            <Lifeline $x={176} $y={441}>{" : applicant"}</Lifeline>
            <Lifeline $x={1007} $y={441}>{" : system"}</Lifeline>
            <Lifeline $x={1702} $y={441}>{" : database"}</Lifeline>
            <Message $x={677} $y={554}>enter applicant id</Message>
            <Message $x={742} $y={680}>display status</Message>
            <Message $x={1384} $y={602}>
              fetch details
              <Handle />
              <Handle $right />
              <Handle $bottom />
              <Handle $right $bottom />
            </Message>
          </Canvas>
        </Editor>
      </Workspace>

      <StatusBar>
        <StatusName>sequence diagram 2</StatusName>
        <StatusRight>
          <ZoomInfo>
            <span>201%</span>
            <ZoomButtons>
              <button>Fit</button>
              <ZoomRule />
              <button>100%</button>
            </ZoomButtons>
          </ZoomInfo>
          <ZoomCell aria-label="Zoom out"><Magnifier /></ZoomCell>
          <SliderCell><Slider type="range" defaultValue={40} aria-label="Zoom" /></SliderCell>
          <ZoomCell aria-label="Zoom in"><Magnifier plus /></ZoomCell>
        </StatusRight>
      </StatusBar>

      <Taskbar>
        <Weather aria-label="Weather">
          <Ico w={40} h={38}>
            <defs>
              <linearGradient id="moon" x1="0" y1="0" x2="0.700" y2="1">
                <stop stopColor="#b9c3cf" /><stop offset="1" stopColor="#787f87" />
              </linearGradient>
            </defs>
            <circle cx="19" cy="19" r="18" fill="url(#moon)" />
            <path d="M21 32a5 5 0 0 1 0-10 8 8 0 0 1 14 1 5 5 0 0 1 0 9z" fill="#e6eaee" />
          </Ico>
        </Weather>

        <Apps>
          <AppButton aria-label="Start">
            <Ico s={42}>
              <defs>
                <linearGradient id="win" x1="0" y1="0" x2="42" y2="42" gradientUnits="userSpaceOnUse">
                  <stop stopColor="#8fe3ff" /><stop offset="0.500" stopColor="#3dbcff" /><stop offset="1" stopColor="#0a8fff" />
                </linearGradient>
              </defs>
              <path d="M1 1h19v19H1zM22 1h19v19H22zM1 22h19v19H1zM22 22h19v19H22z" fill="url(#win)" />
            </Ico>
          </AppButton>
          <SearchPill>
            <Ico s={25}>
              <circle cx="15" cy="10" r="8.500" stroke="#fff" strokeWidth="2" />
              <path d="M9 16l-8 8" stroke="#fff" strokeWidth="2" />
            </Ico>
            Search
          </SearchPill>
          <AppButton aria-label="Task view">
            <Ico s={42}>
              <path d="M0 13h31v27H0z" fill="#5d6163" />
              <path d="M11 2h31v28H11z" fill="#f0f1f1" />
              <path d="M11 13h20v17H11z" fill="#b9bbbc" />
            </Ico>
          </AppButton>
          <AppButton aria-label="Chat">
            <Ico s={42}>
              <defs>
                <linearGradient id="chat" x1="0" y1="1" x2="1" y2="0">
                  <stop stopColor="#5a4fd0" /><stop offset="0.500" stopColor="#6a68c8" /><stop offset="1" stopColor="#88b0f8" />
                </linearGradient>
              </defs>
              <path d="M21 1a20 20 0 1 1-9 38l-11 2 2-11A20 20 0 0 1 21 1z" fill="url(#chat)" />
              <rect x="9" y="13" width="17" height="16" rx="3" fill="#fff" />
              <path d="M28 18l5-4v14l-5-4z" fill="#fff" />
            </Ico>
          </AppButton>
          <AppButton aria-label="File Explorer">
            <Ico s={42}>
              <path d="M0 5c0-1 1-2 2-2h10l4 4v6H0z" fill="#dc9a08" />
              <path d="M0 10l14-1 3-2h23c1 0 2 1 2 2v29c0 1-1 2-2 2H2c-1 0-2-1-2-2z" fill="#ffcf48" />
              <path d="M7 40V33c0-3 2-5 5-5h18c3 0 5 2 5 5v7z" fill="#0b6cbc" />
              <path d="M13 34h16" stroke="#084c88" strokeWidth="2" />
            </Ico>
          </AppButton>
          <AppButton $running aria-label="Microsoft Store">
            <Ico s={42}>
              <path d="M10 11V4c0-2 1-3 3-3h16c2 0 3 1 3 3v7" stroke="#22aef0" strokeWidth="3" />
              <path d="M1 8h40v28c0 3-2 5-5 5H6c-3 0-5-2-5-5z" fill="#f1f1f1" />
              <path d="M10 7h3v3h-3zM29 7h3v3h-3z" fill="#22aef0" />
              <path d="M12 16h8v8h-8z" fill="#f25022" />
              <path d="M22 16h8v8h-8z" fill="#7fba00" />
              <path d="M12 26h8v8h-8z" fill="#00a4ef" />
              <path d="M22 26h8v8h-8z" fill="#ffb900" />
            </Ico>
          </AppButton>
          <AppButton $running aria-label="Google Chrome">
            <Ico w={54} h={60} vb="-6 -9 54 60">
              <circle cx="21" cy="21" r="21" fill="#fcc41c" />
              <path d="M3 10a21 21 0 0 0 17 32l9-16-8-5z" fill="#259447" />
              <path d="M21 11h18.500A21 21 0 0 0 3 10l9 15z" fill="#e5392d" />
              <circle cx="21" cy="21" r="10.500" fill="#fff" />
              <circle cx="21" cy="21" r="8.500" fill="#3b7cf0" />
              <ellipse cx="35" cy="5" rx="13" ry="14" fill="#160a0a" />
              <path d="M31-3c5-4 10 1 9 7s-3 9-6 10c2-4-1-5-2-9z" fill="#5d160f" />
              <path d="M34-1l2 4-3 3M37 7l-2 5M28 10l5 4" stroke="#d2452a" strokeWidth="2" />
            </Ico>
          </AppButton>
          <AppButton $active aria-label="Umbrello">
            <Ico w={42} h={42}>
              <path d="M0 5h42v32H0z" fill="#f6f6f6" />
              <path d="M0 5h42v2H0z" fill="#9a8f88" />
              <path d="M2 12h7M2 15h7M2 18h7M2 21h7M2 24h7M32 12h8M32 15h8M32 18h8M32 21h8" stroke="#c0c0c0" />
              <path d="M12 10h18v23H12z" fill="#0f6fc4" />
            </Ico>
          </AppButton>
          <AppButton $running aria-label="Photos">
            <Ico w={38} h={38}>
              <defs>
                <linearGradient id="photo" x1="0" y1="0" x2="1" y2="1">
                  <stop stopColor="#1590e0" /><stop offset="0.600" stopColor="#3f62b8" /><stop offset="1" stopColor="#a04c9c" />
                </linearGradient>
                <linearGradient id="hill" x1="0" y1="1" x2="1" y2="0">
                  <stop stopColor="#4fdcfa" /><stop offset="1" stopColor="#22a6ee" />
                </linearGradient>
              </defs>
              <rect width="38" height="38" rx="5" fill="url(#photo)" />
              <path d="M9 38l17-15 12 11c0 2-2 4-4 4z" fill="#0a64c0" />
              <path d="M0 32l15-16c2-2 4-2 6 0l5 6L9 38H5c-3 0-5-2-5-6z" fill="url(#hill)" />
              <circle cx="28" cy="8" r="4" fill="#e8f0f8" />
            </Ico>
          </AppButton>
        </Apps>

        <Tray>
          <TrayButton aria-label="Show hidden icons">
            <Ico w={18} h={10}><path d="M1 9l8-8 8 8" stroke="#fff" strokeWidth="1.500" /></Ico>
          </TrayButton>
          <TrayButton $before={19} aria-label="OneDrive">
            <Ico w={29} h={28} vb="0 -4 29 28">
              <path d="M6 12a9 9 0 0 1 17-5l1 9H8z" fill="#858d92" />
              <path d="M6 19a6 6 0 0 1-1-12c5-2 9 1 10 4l-2 8z" fill="#ccd0d2" />
              <circle cx="20" cy="16" r="8" fill="#fff" />
              <path d="M15 15a5 5 0 0 1 9-2M25 17a5 5 0 0 1-9 2M24 10v3h-3M16 22v-3h3" stroke="#1670c4" strokeWidth="1.500" />
            </Ico>
          </TrayButton>
          <TrayButton $before={25}>ENG<br />IN</TrayButton>
          <TrayButton $before={32} aria-label="Wi-Fi"><WifiIcon /></TrayButton>
          <TrayButton $before={14} aria-label="Volume">
            <Ico w={28} h={24}>
              <path d="M1 8h5l6-6v20l-6-6H1z" stroke="#fff" strokeWidth="2" strokeLinejoin="round" />
              <path d="M16 8c2 2 2 6 0 8" stroke="#fff" strokeWidth="2" />
              <path d="M19 5c4 4 4 10 0 14M23 2c5 6 5 14 0 20" stroke="#51636a" strokeWidth="2" />
            </Ico>
          </TrayButton>
          <TrayButton $before={14} aria-label="Battery">
            <Ico w={28} h={24}>
              <path d="M12 4h9c2 0 3 1 3 3v10c0 2-1 3-3 3H9c-2 0-3-1-3-3" stroke="#fff" strokeWidth="2" />
              <path d="M12 7h9v10H9v-4z" fill="#fff" />
              <path d="M24 9h2c2 0 2 1 2 3s0 3-2 3h-2z" fill="#fff" />
              <path d="M0 4h10v5c0 2-2 3-4 3v8H4v-8c-2 0-4-1-4-3zM2 0h2v4H2zM6 0h2v4H6z" fill="#fff" />
            </Ico>
          </TrayButton>
          <Clock>12:57<br />04-05-2023</Clock>
          <Badge>3</Badge>
        </Tray>
      </Taskbar>
    </Window>
  );
}
